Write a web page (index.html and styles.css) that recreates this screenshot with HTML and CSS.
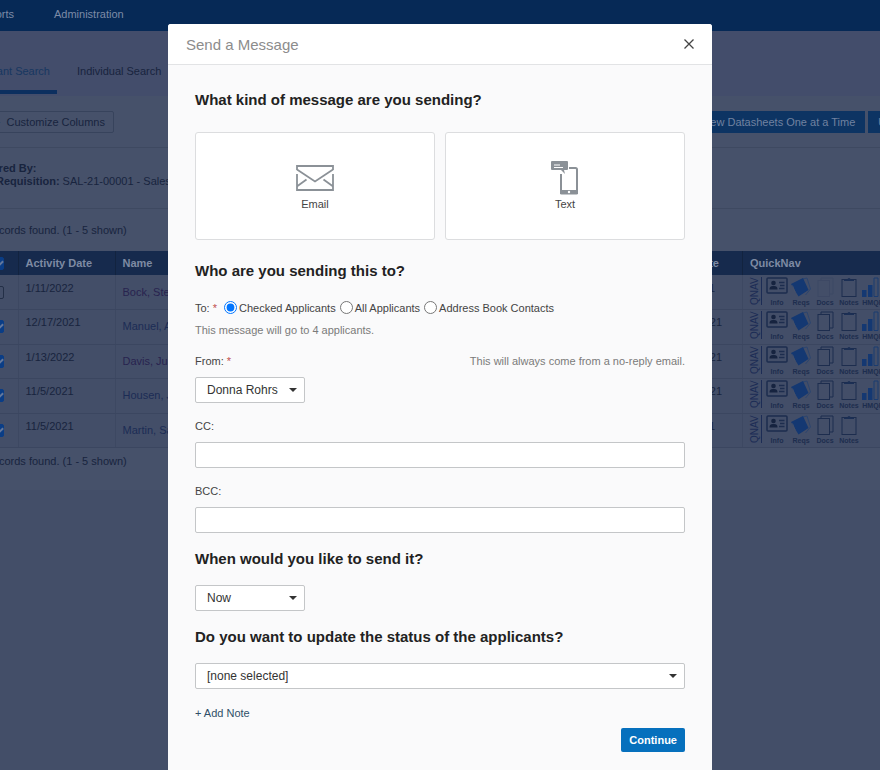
FILE: index.html
```html
<!DOCTYPE html>
<html lang="en">
<head>
    <meta charset="UTF-8">
    <meta name="viewport" content="width=device-width, initial-scale=1.0">
    <title>Send a Message</title>
    <link rel="stylesheet" href="styles.css">
</head>
<body>

<!-- Icons used in the QuickNav column -->
<svg class="sprite" aria-hidden="true">
    <symbol id="icon-info" viewBox="0 0 22 18">
        <rect x="1" y="1" width="20" height="15" rx="1" fill="none" stroke="currentColor" stroke-width="1.5"/>
        <circle cx="7.500" cy="6" r="2.300" fill="#16233f"/>
        <path d="M3.500 12.500c0-3 1.500-3.500 4-3.500s4 .5 4 3.500z" fill="#16233f"/>
        <path d="M13 5.500h5.500M14 8.500h4.500M13 11.500h5.500" stroke="currentColor" stroke-width="1.300"/>
    </symbol>
    <symbol id="icon-reqs" viewBox="0 0 20 20">
        <path d="M12 2l4-1 3.500 11-5 6" fill="none" stroke="#2c456f"/>
        <path d="M0 7L12 1l5.500 12-10 6.500z" fill="#143872"/>
        <path d="M1.500 8.500L4 15" stroke="#46516a"/>
    </symbol>
    <symbol id="icon-docs" viewBox="0 0 17 20">
        <path d="M4 3V1h12v16h-3" fill="none" stroke="currentColor"/>
        <rect x="1" y="3.500" width="11.500" height="16" fill="none" stroke="currentColor"/>
    </symbol>
    <symbol id="icon-notes" viewBox="0 0 16 20">
        <rect x="1" y="2.500" width="14" height="17" fill="none" stroke="currentColor"/>
        <path d="M3 4V2.500h3.500a1.500 1.500 0 0 1 3 0H13V4z" fill="#1b2f55"/>
    </symbol>
    <symbol id="icon-hmqr" viewBox="0 0 22 20">
        <path d="M0 13h4.500v7H0zM6 8h4.500v12H6z" fill="#143872"/>
        <path d="M12 1h4v18.500h-4z" fill="none" stroke="#1b3c70"/>
        <path d="M18 5h4v15h-4z" fill="#143872"/>
    </symbol>
</svg>

<div class="page">
    <nav class="topbar">
        <a href="#" class="topbar-reports">Reports</a>
        <a href="#">Administration</a>
    </nav>

    <div class="tabs">
        <a href="#" class="tab tab-active">Applicant Search</a>
        <a href="#" class="tab">Individual Search</a>
    </div>

    <div class="toolbar">
        <button type="button" class="btn-outline">+&nbsp; Customize Columns</button>
        <div class="toolbar-right">
            <button type="button" class="btn-dark">View Datasheets One at a Time</button>
            <button type="button" class="btn-dark">Update Status</button>
        </div>
    </div>

    <div class="filters">
        <strong>Filtered By:</strong>
        <div class="filter"><strong>Requisition:</strong> SAL-21-00001 - Sales</div>
    </div>

    <p class="count">5 records found. (1 - 5 shown)</p>

    <table class="results">
        <thead>
            <tr>
                <th class="col-check"><input type="checkbox" aria-label="Select all" checked></th>
                <th class="col-date">Activity Date</th>
                <th>Name</th>
                <th class="col-start">Start Date</th>
                <th class="col-nav">QuickNav</th>
            </tr>
        </thead>
        <tbody>
            <tr>
                <td><input type="checkbox" aria-label="Select Bock"></td>
                <td class="date">1/11/2022</td>
                <td><a href="#" class="visited">Bock, Steven</a></td>
                <td class="date">11/5/2021</td>
                <td>
                    <div class="quicknav">
                        <a href="#" class="qnav">QNAV</a>
                        <a href="#" class="qn"><svg width="22" height="18"><use href="#icon-info"/></svg>Info</a>
                        <a href="#" class="qn"><svg width="20" height="20"><use href="#icon-reqs"/></svg>Reqs</a>
                        <a href="#" class="qn qn-empty"><svg width="17" height="20"><use href="#icon-docs"/></svg>Docs</a>
                        <a href="#" class="qn"><svg width="16" height="20"><use href="#icon-notes"/></svg>Notes</a>
                        <a href="#" class="qn"><svg width="22" height="20"><use href="#icon-hmqr"/></svg>HMQR</a>
                    </div>
                </td>
            </tr>
            <tr>
                <td><input type="checkbox" aria-label="Select Manuel" checked></td>
                <td class="date">12/17/2021</td>
                <td><a href="#">Manuel, Andrew</a></td>
                <td class="date">12/17/2021</td>
                <td>
                    <div class="quicknav">
                        <a href="#" class="qnav">QNAV</a>
                        <a href="#" class="qn"><svg width="22" height="18"><use href="#icon-info"/></svg>Info</a>
                        <a href="#" class="qn"><svg width="20" height="20"><use href="#icon-reqs"/></svg>Reqs</a>
                        <a href="#" class="qn"><svg width="17" height="20"><use href="#icon-docs"/></svg>Docs</a>
                        <a href="#" class="qn"><svg width="16" height="20"><use href="#icon-notes"/></svg>Notes</a>
                        <a href="#" class="qn"><svg width="22" height="20"><use href="#icon-hmqr"/></svg>HMQR</a>
                    </div>
                </td>
            </tr>
            <tr>
                <td><input type="checkbox" aria-label="Select Davis" checked></td>
                <td class="date">1/13/2022</td>
                <td><a href="#" class="visited">Davis, Julia</a></td>
                <td class="date">12/13/2021</td>
                <td>
                    <div class="quicknav">
                        <a href="#" class="qnav">QNAV</a>
                        <a href="#" class="qn"><svg width="22" height="18"><use href="#icon-info"/></svg>Info</a>
                        <a href="#" class="qn"><svg width="20" height="20"><use href="#icon-reqs"/></svg>Reqs</a>
                        <a href="#" class="qn"><svg width="17" height="20"><use href="#icon-docs"/></svg>Docs</a>
                        <a href="#" class="qn"><svg width="16" height="20"><use href="#icon-notes"/></svg>Notes</a>
                        <a href="#" class="qn"><svg width="22" height="20"><use href="#icon-hmqr"/></svg>HMQR</a>
                    </div>
                </td>
            </tr>
            <tr>
                <td><input type="checkbox" aria-label="Select Housen" checked></td>
                <td class="date">11/5/2021</td>
                <td><a href="#">Housen, John</a></td>
                <td class="date">10/15/2021</td>
                <td>
                    <div class="quicknav">
                        <a href="#" class="qnav">QNAV</a>
                        <a href="#" class="qn"><svg width="22" height="18"><use href="#icon-info"/></svg>Info</a>
                        <a href="#" class="qn"><svg width="20" height="20"><use href="#icon-reqs"/></svg>Reqs</a>
                        <a href="#" class="qn"><svg width="17" height="20"><use href="#icon-docs"/></svg>Docs</a>
                        <a href="#" class="qn"><svg width="16" height="20"><use href="#icon-notes"/></svg>Notes</a>
                        <a href="#" class="qn"><svg width="22" height="20"><use href="#icon-hmqr"/></svg>HMQR</a>
                    </div>
                </td>
            </tr>
            <tr>
                <td><input type="checkbox" aria-label="Select Martin" checked></td>
                <td class="date">11/5/2021</td>
                <td><a href="#">Martin, Sarah</a></td>
                <td class="date">11/5/2021</td>
                <td>
                    <div class="quicknav">
                        <a href="#" class="qnav">QNAV</a>
                        <a href="#" class="qn"><svg width="22" height="18"><use href="#icon-info"/></svg>Info</a>
                        <a href="#" class="qn"><svg width="20" height="20"><use href="#icon-reqs"/></svg>Reqs</a>
                        <a href="#" class="qn"><svg width="17" height="20"><use href="#icon-docs"/></svg>Docs</a>
                        <a href="#" class="qn"><svg width="16" height="20"><use href="#icon-notes"/></svg>Notes</a>
                    </div>
                </td>
            </tr>
        </tbody>
    </table>

    <p class="count count-bottom">5 records found. (1 - 5 shown)</p>
</div>

<!-- Send a Message dialog -->
<div class="overlay">
    <form class="modal" role="dialog" aria-labelledby="modal-title">
        <div class="modal-header">
            <h1 id="modal-title">Send a Message</h1>
            <button type="button" class="close" aria-label="Close">
                <svg width="10" height="10" viewBox="0 0 10 10"><path d="M.5.5l9 9M9.500.5l-9 9" stroke="#444" stroke-width="1.300"/></svg>
            </button>
        </div>

        <div class="modal-body">
            <h2>What kind of message are you sending?</h2>
            <div class="cards">
                <button type="button" class="card">
                    <svg width="38" height="34" viewBox="0 0 38 34" fill="none" stroke="#8b9197" stroke-width="1.800">
                        <path d="M1 9V5h36v4M1 13v16h36V13M1 8.500l18 12 18-12M1.500 25l9-6.500M36.500 25l-9-6.500"/>
                    </svg>
                    Email
                </button>
                <button type="button" class="card">
                    <svg width="28" height="34" viewBox="0 0 28 34">
                        <path d="M1 0h15a1 1 0 0 1 1 1v7a1 1 0 0 1-1 1h-3l1 4-4-4H1a1 1 0 0 1-1-1V1a1 1 0 0 1 1-1z" fill="#8b9197"/>
                        <path d="M3 4h6M3 6.500h9" stroke="#fff"/>
                        <path d="M18 7h6.500a1.500 1.500 0 0 1 1.500 1.500V32H10V13" fill="none" stroke="#8b9197" stroke-width="2"/>
                        <path d="M9 29h18v3a1.500 1.500 0 0 1-1.500 1.500h-15A1.500 1.500 0 0 1 9 32z" fill="#8b9197"/>
                        <circle cx="18" cy="31" r="1.200" fill="#fff"/>
                    </svg>
                    Text
                </button>
            </div>

            <h2>Who are you sending this to?</h2>
            <div class="recipients">
                <span class="to">To: <span class="required">*</span></span>
                <label><input type="radio" name="to" checked>Checked Applicants</label>
                <label><input type="radio" name="to">All Applicants</label>
                <label><input type="radio" name="to">Address Book Contacts</label>
            </div>
            <p class="hint">This message will go to 4 applicants.</p>

            <div class="label-row">
                <label for="from">From: <span class="required">*</span></label>
                <span class="hint">This will always come from a no-reply email.</span>
            </div>
            <div class="select select-small">
                <select id="from"><option>Donna Rohrs</option></select>
            </div>

            <label class="field-label" for="cc">CC:</label>
            <input type="text" id="cc" class="text-input">

            <label class="field-label" for="bcc">BCC:</label>
            <input type="text" id="bcc" class="text-input">

            <h2><label for="when">When would you like to send it?</label></h2>
            <div class="select select-small">
                <select id="when"><option>Now</option></select>
            </div>

            <h2><label for="status">Do you want to update the status of the applicants?</label></h2>
            <div class="select">
                <select id="status"><option>[none selected]</option></select>
            </div>

            <a href="#" class="add-note">+ Add Note</a>
            <div class="actions">
                <button type="submit" class="btn-primary">Continue</button>
            </div>
        </div>
    </form>
</div>

</body>
</html>
```
FILE: styles.css
```css
* {
    box-sizing: border-box;
}
body {
    margin: 0;
    overflow: hidden;
    font-family: "Liberation Sans", Arial, sans-serif;
    font-size: 11px;
    line-height: 13px;
    color: #18243e;
    background-color: #434e68;
}
a {
    color: inherit;
    text-decoration: none;
}
button,
input,
select {
    font-family: inherit;
}
.sprite {
    display: none;
}

/* Page behind the dialog, scrolled a little to the right */
.page {
    width: calc(100% + 100px);
    min-height: 100vh;
    margin-left: -40px;
}
.topbar {
    display: flex;
    gap: 40px;
    height: 31px;
    padding: 8px 0 0;
    color: #7d8ba7;
    background-color: #062956;
}
.topbar-reports {
    width: 54px;
    text-align: right;
}
.tabs {
    display: flex;
    gap: 20px;
    height: 65px;
    padding-top: 34px;
    background-color: #434d6b;
}
.tab {
    height: 29px;
    text-align: right;
}
.tab-active {
    width: 97px;
    padding-right: 7px;
    color: #173761;
    border-bottom: 4px solid #0c2f5f;
}
.toolbar {
    display: flex;
    justify-content: space-between;
    height: 52px;
    padding: 15px 0 0 25px;
    background-color: #46516a;
    border-bottom: 1px solid #3e4961;
}
.toolbar button {
    height: 22px;
    font-size: 11px;
}
.btn-outline {
    padding: 0 8px;
    color: #18243e;
    background: none;
    border: 1px solid #37435c;
    border-radius: 2px;
}
.toolbar-right {
    display: flex;
    gap: 3px;
    margin-right: -18px;
}
.btn-dark {
    padding: 0 10px;
    color: #7182a0;
    background-color: #0d3463;
    border: none;
}
.filters {
    height: 61px;
    padding: 14px 0 0 16px;
    background-color: #46516a;
    border-bottom: 1px solid #3e4961;
}
.filter {
    padding-left: 20px;
}
.count {
    height: 42px;
    margin: 0;
    padding: 15px 0 0 20px;
    background-color: #46516a;
}
.count-bottom {
    padding-top: 7px;
}
.results {
    width: 100%;
    height: 197px;
    table-layout: fixed;
    border-collapse: collapse;
    background-color: #434e68;
}
.results th {
    height: 24px;
    padding: 0 7px;
    text-align: left;
    color: #7e8aa3;
    background-color: #162a4d;
    border-right: 1px solid #12233f;
}
.results td {
    height: 34px;
    padding: 0 7px;
    border-right: 1px solid #3d4862;
    border-bottom: 1px solid #3b4660;
}
.results .date {
    padding-bottom: 8px;
}
.results .col-check {
    width: 58px;
}
.results .col-date {
    width: 97px;
}
.results .col-start {
    width: 83px;
}
.results .col-nav {
    width: 197px;
}
.results td a {
    color: #1c2c55;
}
.results td .visited {
    color: #28234f;
}
.results input {
    appearance: none;
    display: block;
    width: 13px;
    height: 13px;
    margin: 0 0 0 24px;
    border: 1px solid #232f47;
    border-radius: 2px;
}
.results input:checked {
    background-color: #0a3d86;
    border-color: #0a3d86;
}
.results input:checked::after {
    content: "";
    display: block;
    width: 7px;
    height: 4px;
    margin: 2px;
    border-left: 2px solid #64789c;
    border-bottom: 2px solid #64789c;
    transform: rotate(-45deg);
}
.quicknav {
    display: flex;
    align-items: flex-start;
    height: 31px;
}
.quicknav .qnav {
    width: 12px;
    height: 28px;
    margin-right: 3px;
    font-size: 10px;
    line-height: 10px;
    writing-mode: vertical-rl;
    transform: rotate(180deg);
    border-left: 1px solid #1c2c55;
}
.quicknav .qn {
    display: flex;
    flex-direction: column;
    align-items: center;
    justify-content: space-between;
    width: 24px;
    height: 29px;
    font-size: 7px;
    font-weight: bold;
    line-height: 7px;
    color: #1d2d4e;
}
.qn-empty svg {
    opacity: 0.15;
}

/* Dialog */
.overlay {
    position: fixed;
    inset: 0;
    display: flex;
    justify-content: center;
    align-items: flex-start;
    padding-top: 24px;
    overflow: hidden;
}
.modal {
    width: 100%;
    max-width: 544px;
    min-height: 100%;
    color: #444;
    background-color: #fafafb;
    border-radius: 3px 3px 0 0;
}
.modal-header {
    display: flex;
    justify-content: space-between;
    align-items: center;
    height: 41px;
    padding: 0 18px;
    background-color: #fff;
    border-bottom: 1px solid #e2e3e5;
    border-radius: 3px 3px 0 0;
}
.modal-header h1 {
    margin: 0;
    font-size: 15px;
    font-weight: normal;
    color: #8c8c8c;
}
.close {
    display: flex;
    padding: 0;
    background: none;
    border: none;
    cursor: pointer;
}
.modal-body {
    padding: 25px 27px;
}
.modal-body h2 {
    margin: 0;
    font-size: 15px;
    line-height: 20px;
    color: #222;
}
.cards {
    display: grid;
    grid-template-columns: 1fr 1fr;
    gap: 10px;
    margin: 22px 0 21px;
}
.card {
    display: flex;
    flex-direction: column;
    align-items: center;
    justify-content: flex-end;
    gap: 2px;
    height: 108px;
    padding: 0 0 28px;
    font-size: 11px;
    line-height: 14px;
    color: #444;
    background-color: #fff;
    border: 1px solid #dcdddf;
    border-radius: 3px;
    cursor: pointer;
}
.card svg {
    flex-shrink: 0;
}
.recipients {
    display: flex;
    align-items: center;
    gap: 4px;
    margin-top: 18px;
    height: 18px;
}
.recipients .to {
    margin-right: 3px;
}
.recipients label {
    display: flex;
    align-items: center;
}
.recipients input {
    width: 13px;
    height: 13px;
    margin: 0 2px 2px 0;
}
.required {
    color: #c0504d;
}
.hint {
    margin: 0;
    color: #7a7a7a;
}
p.hint {
    margin-top: 7px;
}
.label-row {
    display: flex;
    justify-content: space-between;
    margin: 18px 0 9px;
}
.select {
    position: relative;
    margin-bottom: 17px;
}
.select-small {
    width: 110px;
}
.select::after {
    content: "";
    position: absolute;
    top: 11px;
    right: 8px;
    border: 4px solid transparent;
    border-top-color: #333;
    border-bottom: none;
    pointer-events: none;
}
.select select {
    appearance: none;
    display: block;
    width: 100%;
    height: 26px;
    padding: 0 11px;
    font-size: 12px;
    color: #333;
    background-color: #fff;
    border: 1px solid #c4c6c8;
    border-radius: 2px;
}
.field-label {
    display: block;
    margin-bottom: 9px;
}
.text-input {
    display: block;
    width: 100%;
    height: 26px;
    margin-bottom: 17px;
    padding: 0 8px;
    font-size: 12px;
    background-color: #fff;
    border: 1px solid #c4c6c8;
    border-radius: 2px;
}
.modal-body .text-input + h2 {
    margin-top: -1px;
}
.modal-body h2 + .select {
    margin: 16px 0;
}
.add-note {
    display: block;
    width: max-content;
    padding-top: 2px;
    color: #2f4f68;
}
.actions {
    display: flex;
    justify-content: flex-end;
    margin-top: 8px;
}
.btn-primary {
    height: 24px;
    padding: 0 8px;
    font-size: 11px;
    font-weight: bold;
    color: #fff;
    background-color: #0670bd;
    border: none;
    border-radius: 2px;
    cursor: pointer;
}
```
